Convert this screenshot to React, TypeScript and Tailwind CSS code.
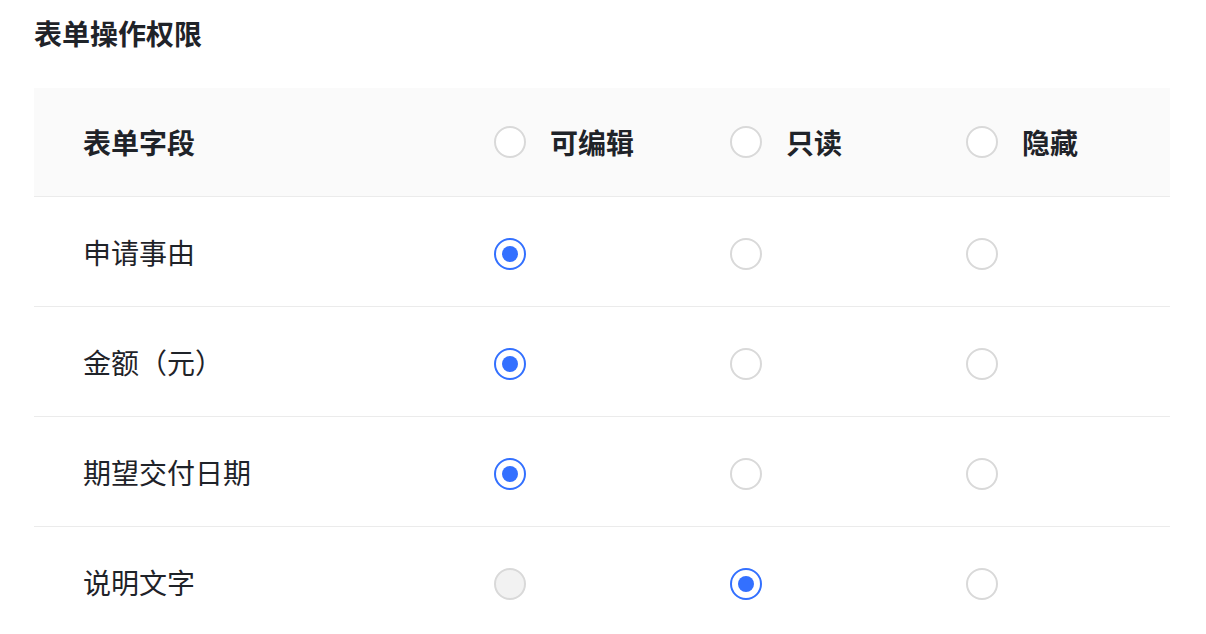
import React from 'react';

type Perm = 'edit' | 'read' | 'hide';

interface FieldRow {
    name: string;
    value: Perm;
    editDisabled?: boolean;
}

const rows: FieldRow[] = [
    { name: '申请事由', value: 'edit' },
    { name: '金额（元）', value: 'edit' },
    { name: '期望交付日期', value: 'edit' },
    { name: '说明文字', value: 'read', editDisabled: true },
];

function Radio({ checked, disabled }: { checked?: boolean; disabled?: boolean }) {
    if (checked) {
        return (
            <span className="flex h-8 w-8 shrink-0 items-center justify-center rounded-full border-2 border-[#3370ff] bg-white">
                <span className="h-4 w-4 rounded-full bg-[#3370ff]" />
            </span>
        );
    }
    return (
        <span
            className={
                disabled
                    ? 'block h-8 w-8 shrink-0 rounded-full border-2 border-[#d9d9d9] bg-[#f2f2f2]'
                    : 'block h-8 w-8 shrink-0 rounded-full border-2 border-[#d9d9d9] bg-white'
            }
        />
    );
}

export default function App() {
    return (
        <div
            className="min-h-screen bg-white pl-[34px] pr-[36px] pt-[12px] text-[#1f2329]"
            style={{ fontFamily: '"Noto Sans CJK SC", "Noto Sans", sans-serif' }}
        >
            <h1 className="h-[42px] text-[28px] font-bold leading-[42px]">表单操作权限</h1>

            <div className="mt-[34px] w-[1136px]">
                {/* header */}
                <div className="grid h-[109px] grid-cols-[460px_236px_236px_1fr] items-center border-b border-[#ebebeb] bg-[#fafafa]">
                    <div className="pl-[49px] text-[28px] font-bold">表单字段</div>
                    <div className="flex items-center gap-6">
                        <Radio />
                        <span className="text-[28px] font-bold">可编辑</span>
                    </div>
                    <div className="flex items-center gap-6">
                        <Radio />
                        <span className="text-[28px] font-bold">只读</span>
                    </div>
                    <div className="flex items-center gap-6">
                        <Radio />
                        <span className="text-[28px] font-bold">隐藏</span>
                    </div>
                </div>

                {rows.map((r) => (
                    <div
                        key={r.name}
                        className="grid h-[110px] grid-cols-[460px_236px_236px_1fr] items-center border-b border-[#ebebeb]"
                    >
                        <div className="pl-[49px] text-[28px]">{r.name}</div>
                        <div className="pt-[4px]">
                            <Radio checked={r.value === 'edit'} disabled={r.editDisabled} />
                        </div>
                        <div className="pt-[4px]">
                            <Radio checked={r.value === 'read'} />
                        </div>
                        <div className="pt-[4px]">
                            <Radio checked={r.value === 'hide'} />
                        </div>
                    </div>
                ))}
            </div>
        </div>
    );
}
